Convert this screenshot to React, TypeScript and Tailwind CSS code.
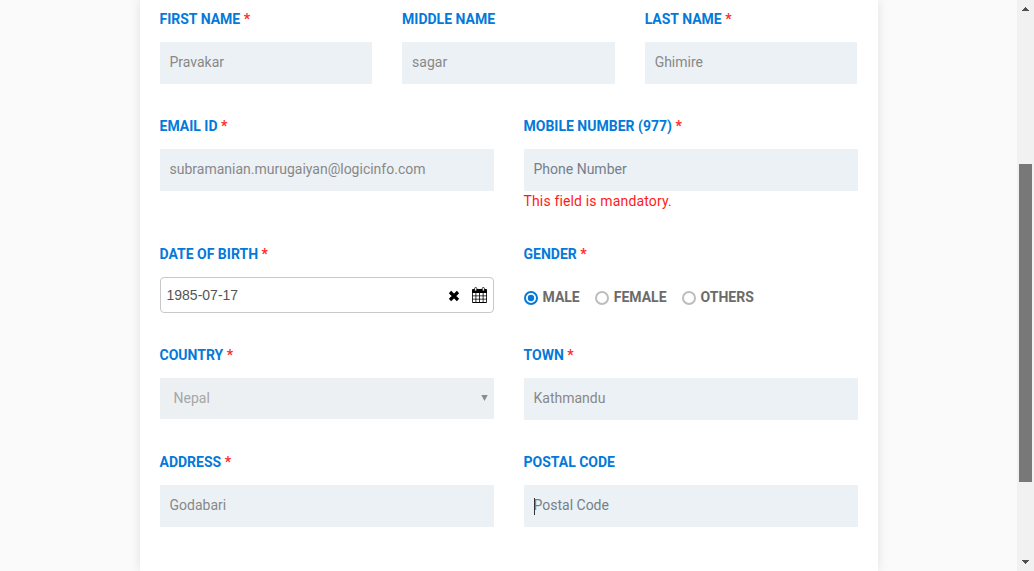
import type { ReactNode } from "react";

function Label({ text, required }: { text: string; required?: boolean }) {
  return (
    <div className="h-[33px] text-[14px] leading-[20px] font-bold whitespace-nowrap text-[#0479d9]">
      {text}
      {required && <span className="text-[#ff2a2a]"> *</span>}
    </div>
  );
}

function TextField({ value, placeholder }: { value?: string; placeholder?: string }) {
  return (
    <input
      type="text"
      defaultValue={value}
      placeholder={placeholder}
      className="block h-[42px] w-full bg-[#ecf1f5] px-[10px] pb-[2px] text-[14px] text-[#888888] outline-none placeholder:text-[#75808a]"
    />
  );
}

function Field({ label, required, children }: { label: string; required?: boolean; children: ReactNode }) {
  return (
    <div className="min-w-0 flex-1">
      <Label text={label} required={required} />
      {children}
    </div>
  );
}

function Radio({ label, checked }: { label: string; checked?: boolean }) {
  return (
    <div className="flex items-center gap-[5px]">
      <svg width="14" height="14" viewBox="0 0 14 14" className="relative top-[0.5px]">
        <circle cx="7" cy="7" r="6" fill="#fff" stroke={checked ? "#0479d9" : "#bdbdbd"} strokeWidth="2" />
        {checked && <circle cx="7" cy="7" r="3.2" fill="#0479d9" />}
      </svg>
      <span className="text-[14px] leading-[20px] font-bold text-[#6b6b6b]">{label}</span>
    </div>
  );
}

function DateField() {
  return (
    <div className="flex h-[36px] items-center rounded-[4px] border border-[#c8c8c8] bg-white pr-[5.5px] pl-[6px]">
      <span className="flex-1 font-['Liberation_Sans',Arial,sans-serif] text-[14px] leading-[20px] text-[#555555]">
        1985-07-17
      </span>
      <svg width="12" height="12" viewBox="0 0 12 12" className="relative top-[0.5px] mr-[12px]">
        <path d="M2 2 L10 10 M10 2 L2 10" stroke="#000" strokeWidth="3.2" />
      </svg>
      <svg width="15" height="16" viewBox="0 0 15 16">
        <path d="M1 2H14Q15 2 15 3V15Q15 16 14 16H1Q0 16 0 15V3Q0 2 1 2Z" fill="#000" />
        <path
          d="M.8 6h2.7v2.5H.8z M4.3 6h2.8v2.5H4.3z M7.9 6h2.8v2.5H7.9z M11.5 6h2.7v2.5h-2.7z M.8 9.3h2.7v2.5H.8z M4.3 9.3h2.8v2.5H4.3z M7.9 9.3h2.8v2.5H7.9z M11.5 9.3h2.7v2.5h-2.7z M.8 12.6h2.7v2.5H.8z M4.3 12.6h2.8v2.5H4.3z M7.9 12.6h2.8v2.5H7.9z M11.5 12.6h2.7v2.5h-2.7z"
          fill="#fff"
        />
        <rect x="2.6" y="0.5" width="2.2" height="3.6" rx="1" fill="#fff" stroke="#000" strokeWidth="0.8" />
        <rect x="10.2" y="0.5" width="2.2" height="3.6" rx="1" fill="#fff" stroke="#000" strokeWidth="0.8" />
      </svg>
    </div>
  );
}

function Scrollbar() {
  return (
    <div className="flex h-full w-[17px] shrink-0 flex-col items-center bg-[#f1f1f1]">
      <svg width="17" height="17" viewBox="0 0 17 17" shapeRendering="crispEdges">
        <path d="M8 7h1v1h1v1h1v1h1v1H5v-1h1V9h1V8h1z" fill="#505050" />
      </svg>
      <div className="mt-[147px] h-[318px] w-[13px] bg-[#787878]" />
      <div className="flex-1" />
      <svg width="17" height="17" viewBox="0 0 17 17" shapeRendering="crispEdges">
        <path d="M5 6h7v1h-1v1h-1v1H9v1H8V9H7V8H6V7H5z" fill="#505050" />
      </svg>
    </div>
  );
}

export default function App() {
  return (
    <div className="flex h-[571px] w-[1034px] overflow-hidden bg-[#fafafa] font-['Roboto',sans-serif]">
      <div className="flex h-full flex-1 justify-center">
        <main className="h-full w-[738px] bg-white px-[20px] pt-[9px] shadow-[0_0_10px_rgba(0,0,0,0.1)]">
          <div className="flex h-[107px] gap-[30px] pr-[0.3px]">
            <Field label="FIRST NAME" required>
              <TextField value="Pravakar" />
            </Field>
            <Field label="MIDDLE NAME">
              <TextField value="sagar" />
            </Field>
            <Field label="LAST NAME" required>
              <TextField value="Ghimire" />
            </Field>
          </div>
          <div className="flex h-[128px] gap-[30px]">
            <Field label="EMAIL ID" required>
              <TextField value="subramanian.murugaiyan@logicinfo.com" />
            </Field>
            <Field label="MOBILE NUMBER (977)" required>
              <TextField placeholder="Phone Number" />
              <p className="text-[14px] leading-[20px] tracking-[0.15px] text-[#ff1a1a]">This field is mandatory.</p>
            </Field>
          </div>
          <div className="flex h-[101px] gap-[30px]">
            <Field label="DATE OF BIRTH" required>
              <DateField />
            </Field>
            <Field label="GENDER" required>
              <div className="flex gap-[15px] pt-[10px]">
                <Radio label="MALE" checked />
                <Radio label="FEMALE" />
                <Radio label="OTHERS" />
              </div>
            </Field>
          </div>
          <div className="flex h-[107px] gap-[30px]">
            <Field label="COUNTRY" required>
              <div className="flex h-[41px] items-center justify-between bg-[#ecf0f3] pr-[5.5px] pl-[14px] text-[14px] text-[#a6a6a6]">
                <span>Nepal</span>
                <svg width="7" height="6" viewBox="0 0 7 6" className="relative top-[-1px]">
                  <path d="M0.3 0H6.7L3.5 6Z" fill="#8b8b8b" />
                </svg>
              </div>
            </Field>
            <Field label="TOWN" required>
              <TextField value="Kathmandu" />
            </Field>
          </div>
          <div className="flex gap-[30px]">
            <Field label="ADDRESS" required>
              <TextField value="Godabari" />
            </Field>
            <Field label="POSTAL CODE">
              <div className="relative">
                <TextField placeholder="Postal Code" />
                <span className="absolute top-[13px] left-[10.5px] h-[17px] w-px bg-[#333333]" />
              </div>
            </Field>
          </div>
        </main>
      </div>
      <Scrollbar />
    </div>
  );
}
